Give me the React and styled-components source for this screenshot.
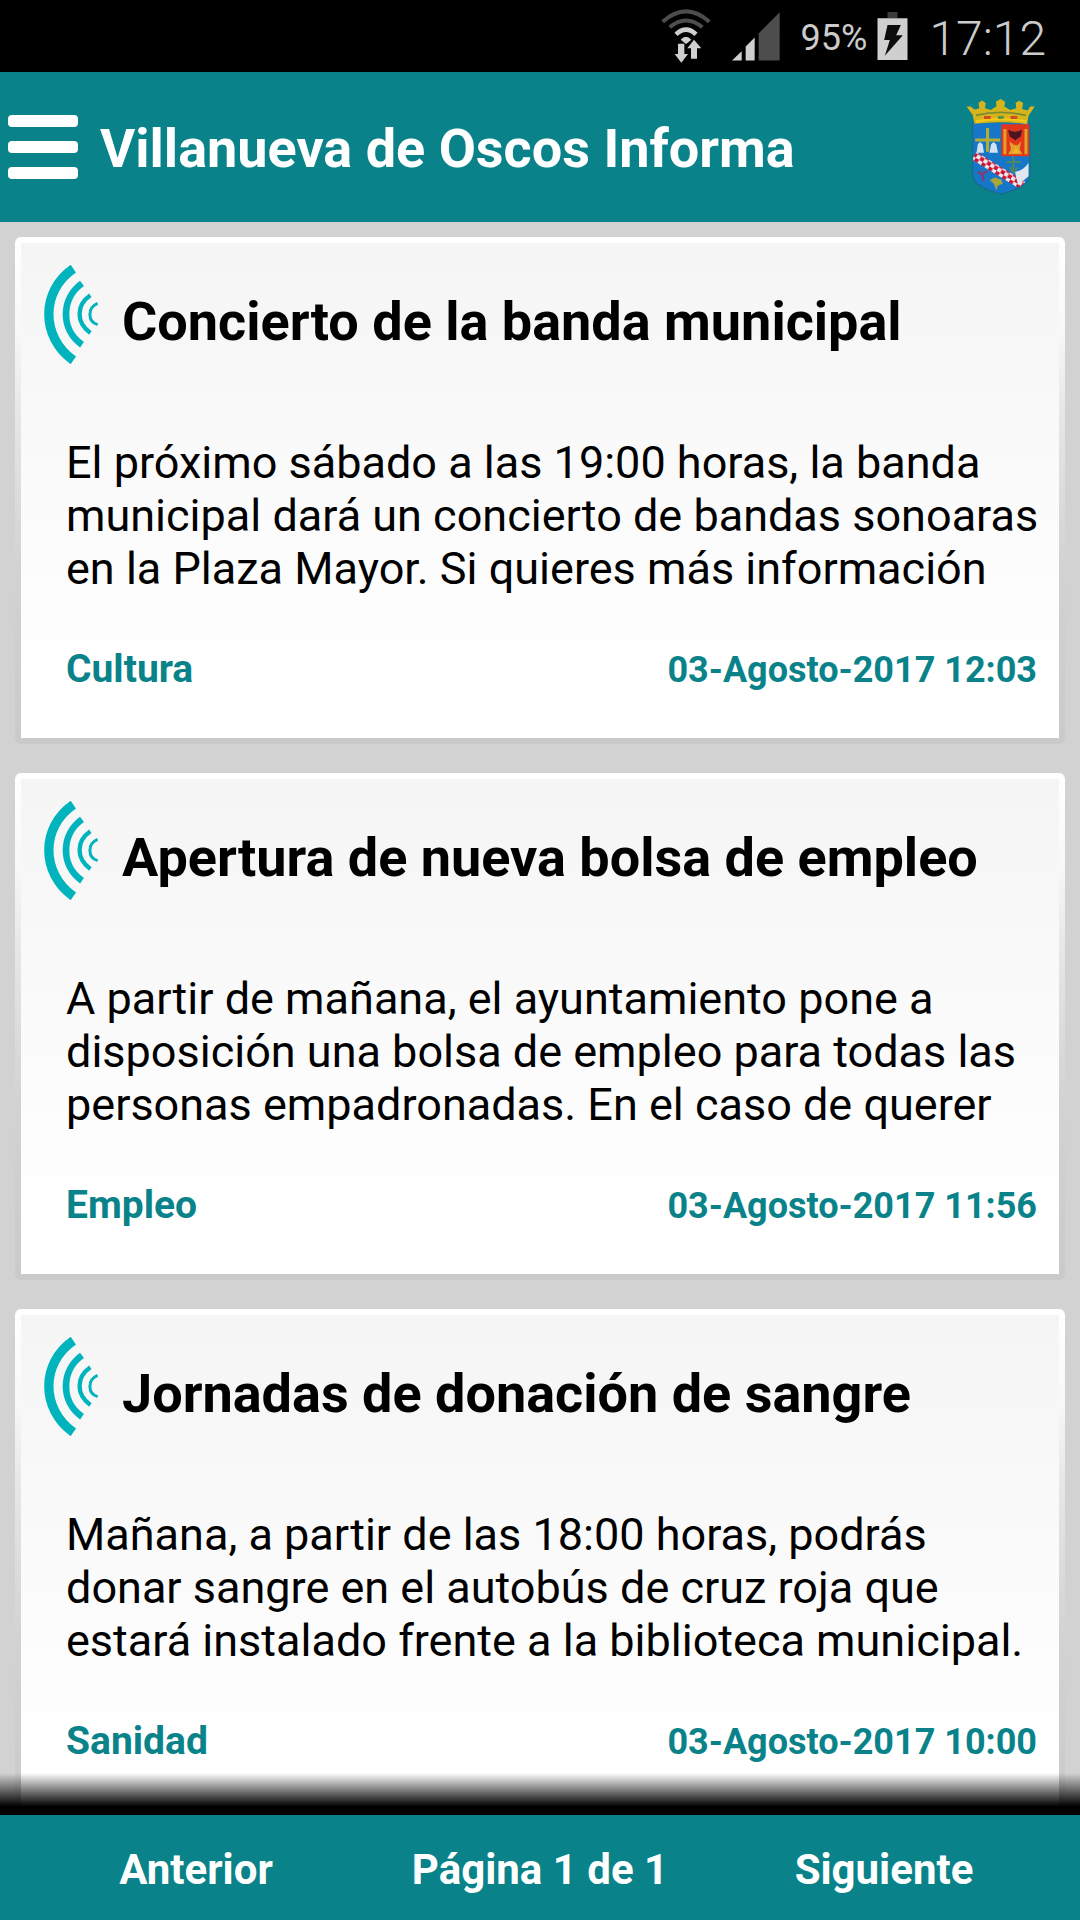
import React, { useState } from "react";
import styled, { createGlobalStyle } from "styled-components";

const news = [
  {
    id: 1,
    title: "Concierto de la banda municipal",
    text: "El próximo sábado a las 19:00 horas, la banda municipal dará un concierto de bandas sonoaras en la Plaza Mayor. Si quieres más información",
    category: "Cultura",
    date: "03-Agosto-2017 12:03",
  },
  {
    id: 2,
    title: "Apertura de nueva bolsa de empleo",
    text: "A partir de mañana, el ayuntamiento pone a disposición una bolsa de empleo para todas las personas empadronadas. En el caso de querer",
    category: "Empleo",
    date: "03-Agosto-2017 11:56",
  },
  {
    id: 3,
    title: "Jornadas de donación de sangre",
    text: "Mañana, a partir de las 18:00 horas, podrás donar sangre en el autobús de cruz roja que estará instalado frente a la biblioteca municipal.",
    category: "Sanidad",
    date: "03-Agosto-2017 10:00",
  },
];

const WifiIcon = () => (
  <svg width="50" height="54" viewBox="66 28 150 162" aria-hidden="true">
    <g fill="none" strokeWidth="12">
      <path d="M71 66 Q141 4 211 66" stroke="#4d4d4d" />
      <path d="M92 83 Q141 42 190 83" stroke="#4d4d4d" />
      <path d="M111 104 Q141 76 171 104" stroke="#cfcfcf" strokeWidth="14" />
    </g>
    <path d="M125 120 Q141 103 157 120 L148 128 L141 133Z" fill="#cfcfcf" />
    <path d="M117 132h19v31h11l-20 26-20-26h10z" fill="#cfcfcf" />
    <path d="M156 177h18v-31h13l-22-26-20 26h11z" fill="#cfcfcf" />
  </svg>
);

const SignalIcon = () => (
  <svg width="48" height="49" viewBox="286 38 144 146" aria-hidden="true">
    <path d="M286 183 L315 155 V183Z" fill="#cfcfcf" />
    <path d="M327 183 V141 L354 114 V183Z" fill="#cfcfcf" />
    <path d="M366 183 V102 L429 38 V183Z" fill="#4d4d4d" />
  </svg>
);

const BatteryIcon = () => (
  <svg width="31" height="48" viewBox="710 36 92 144" aria-hidden="true">
    <path d="M741 36h30v18h-30z" fill="#3c3c3c" />
    <path d="M711 55h90v125h-90z" fill="#cfcfcf" />
    <path d="M741 75h40l-14 31h20l-54 61 15-47h-17z" fill="#0c0c0c" />
  </svg>
);

const WavesIcon = () => (
  <svg width="54" height="99" viewBox="132 134 162 297" aria-hidden="true">
    <g fill="none" stroke="#00b3bd">
      <path d="M220 145 C122 212 122 350 220 420" strokeWidth="28" />
      <path d="M246 189 C182 235 182 329 246 373" strokeWidth="20" />
      <path d="M271 225 C228 255 228 307 271 338" strokeWidth="13" />
      <path d="M293 249 C262 262 262 303 293 313" strokeWidth="9" />
    </g>
  </svg>
);

const CrestIcon = () => (
  <svg width="72" height="100" viewBox="76 58 210 294" role="img" aria-label="Escudo">
    <defs>
      <clipPath id="shield">
        <path d="M99 134H265V280C265 318 228 327 182 342C136 327 99 318 99 280Z" />
      </clipPath>
      <pattern id="checks" width="24" height="24" patternUnits="userSpaceOnUse" patternTransform="rotate(32)">
        <path d="M0 0h24v24H0z" fill="#e9eaf0" />
        <path d="M0 0h12v12H0zM12 12h12v12H12z" fill="#cf1736" />
      </pattern>
      <filter id="soft">
        <feGaussianBlur stdDeviation="2" />
      </filter>
    </defs>
    <g filter="url(#soft)">
      <path d="M96 134H268V282C268 320 230 330 182 346C134 330 96 320 96 282Z" fill="#176c85" />
      <g clipPath="url(#shield)">
        <path d="M96 130h172v214H96z" fill="#1877c9" />
        <path d="M182 138h84v94h-84z" fill="#e2341f" />
        <path d="M188 152h9v74h-9zM250 152h9v74h-9zM206 188l14 12h10l10-12-4 24 8 14h-42l8-14z" fill="#dfa126" />
        <path d="M217 193l7 16-10 14h22l-8-14z" fill="#f0b52a" />
        <path d="M202 154q20 12 41 0l-4 20-16 11-16-11z" fill="#4a1524" />
        <path d="M203 149q20 12 39 0" fill="none" stroke="#d83a22" strokeWidth="5" />
        <path d="M119 190l8 7 4 25h-22l4-25zM159 190l8 7 5 25h-25l5-25z" fill="#d3e2f1" />
        <path d="M137 149h9v70h-9zM105 180h73v9h-73z" fill="#b2ad35" />
        <path d="M102 231L245 318" stroke="url(#checks)" strokeWidth="26" />
        <path d="M222 278q26-4 40-27v40l-31 26z" fill="#dfe6ee" />
        <path d="M217 232v48M197 249h42M207 264l10 16 12-15" fill="none" stroke="#4d8860" strokeWidth="6" />
        <path d="M113 277l11 8 15-9M126 282l4 22" fill="none" stroke="#843d70" strokeWidth="7" />
        <path d="M148 302l15-7 19 6 4 12-15 6-3 14-8-20z" fill="#aaa43e" />
      </g>
      <path
        d="M103 137L98 111L80 87L91 85L103 95L117 92L115 76L125 68L136 76L134 91L151 96L168 85L166 72L180 64L193 72L191 86L208 96L226 91L224 75L235 69L246 76L243 93L259 98L267 86L280 86L262 113L258 138Q180 127 103 137Z"
        fill="#d6b51f"
      />
      <path d="M107 112Q180 94 254 112" fill="none" stroke="#7c8c32" strokeWidth="5" />
      <path d="M108 130Q180 116 254 130" fill="none" stroke="#f3c919" strokeWidth="7" />
      <path d="M131 118h20M209 118h20" stroke="#d14d23" strokeWidth="9" />
      <path d="M172 118h17" stroke="#5b9247" strokeWidth="9" />
    </g>
  </svg>
);

const App = () => {
  const [page, setPage] = useState(1);
  const total = 1;

  return (
    <Screen>
      <GlobalStyle />
      <StatusBar>
        <WifiIcon />
        <SignalIcon />
        <Battery>
          <Percent>95%</Percent>
          <BatteryIcon />
        </Battery>
        <Clock>17:12</Clock>
      </StatusBar>

      <Header>
        <MenuButton aria-label="Menú">
          <Bar />
          <Bar />
          <Bar />
        </MenuButton>
        <HeaderTitle>Villanueva de Oscos Informa</HeaderTitle>
        <CrestIcon />
      </Header>

      <ListWrap>
        <List>
          {news.map((item) => (
            <Card key={item.id}>
              <CardBody>
                <CardHead>
                  <WavesIcon />
                  <CardTitle>{item.title}</CardTitle>
                </CardHead>
                <CardText>{item.text}</CardText>
                <CardFooter>
                  <Category>{item.category}</Category>
                  <PublishDate>{item.date}</PublishDate>
                </CardFooter>
              </CardBody>
            </Card>
          ))}
        </List>
        <Shade />
      </ListWrap>

      <Pager>
        <PagerButton onClick={() => setPage(Math.max(1, page - 1))}>
          Anterior
        </PagerButton>
        <span>
          Página {page} de {total}
        </span>
        <PagerButton onClick={() => setPage(Math.min(total, page + 1))}>
          Siguiente
        </PagerButton>
      </Pager>
    </Screen>
  );
};

export default App;

const GlobalStyle = createGlobalStyle`
  * {
    box-sizing: border-box;
  }

  body {
    margin: 0;
    font-family: Roboto, "Liberation Sans", sans-serif;
    background: #d2d2d2;
  }

  svg {
    display: block;
    flex-shrink: 0;
  }
`;

const Screen = styled.div`
  display: flex;
  flex-direction: column;
  height: 100vh;
`;

const StatusBar = styled.div`
  display: flex;
  align-items: center;
  justify-content: flex-end;
  gap: 21px;
  height: 72px;
  padding-right: 34px;
  background: #000;
  color: #cbcbcb;
  flex-shrink: 0;
`;

const Battery = styled.div`
  display: flex;
  align-items: center;
  gap: 10px;
`;

const Percent = styled.span`
  padding-top: 4px;
  font-size: 36px;
`;

const Clock = styled.span`
  padding-top: 4px;
  font-size: 48px;
  font-weight: 300;
`;

const Header = styled.header`
  display: flex;
  align-items: center;
  height: 150px;
  padding: 0 43px 0 8px;
  background: #098389;
  color: #fff;
  flex-shrink: 0;
`;

const MenuButton = styled.button`
  display: flex;
  flex-direction: column;
  gap: 14px;
  width: 70px;
  padding: 0;
  border: none;
  background: none;
  cursor: pointer;
`;

const Bar = styled.span`
  height: 12px;
  border-radius: 4px;
  background: #fff;
`;

const HeaderTitle = styled.h1`
  flex: 1;
  margin: 0;
  padding: 4px 0 0 22px;
  font-size: 54px;
  line-height: 64px;
  font-weight: 700;
`;

const ListWrap = styled.main`
  position: relative;
  flex: 1;
  min-height: 0;
`;

const List = styled.div`
  display: flex;
  flex-direction: column;
  gap: 29px;
  height: 100%;
  padding: 15px;
  overflow-y: auto;
  scrollbar-width: none;
`;

const Card = styled.article`
  padding: 6px;
  border-radius: 6px;
  background: linear-gradient(
    #fff 0%,
    #f8f8f8 18%,
    #e8e8e8 33%,
    #d2d2d2 65%,
    #cacaca 100%
  );
  flex-shrink: 0;
`;

const CardBody = styled.div`
  padding: 22px 10px 46px 23px;
  background: linear-gradient(#f5f5f5, #fff 90%);
`;

const CardHead = styled.div`
  display: flex;
  align-items: center;
  gap: 24px;
`;

const CardTitle = styled.h2`
  margin: 0;
  padding-top: 14px;
  font-size: 54px;
  line-height: 64px;
  font-weight: 700;
  color: #000;
`;

const CardText = styled.p`
  margin: 72px 0 52px 22px;
  font-size: 45px;
  line-height: 53px;
  color: #000;
`;

const CardFooter = styled.div`
  display: flex;
  align-items: baseline;
  justify-content: space-between;
  margin: 0 12px 0 22px;
  line-height: 44px;
  font-weight: 700;
  color: #098389;
`;

const Category = styled.span`
  font-size: 39px;
`;

const PublishDate = styled.time`
  font-size: 36px;
`;

const Shade = styled.div`
  position: absolute;
  left: 0;
  right: 0;
  bottom: 0;
  height: 42px;
  background: linear-gradient(transparent, #000 80%);
  pointer-events: none;
`;

const Pager = styled.nav`
  display: grid;
  grid-template-columns: repeat(3, 1fr);
  align-items: center;
  height: 105px;
  padding: 4px 24px 0;
  background: #098389;
  color: #fff;
  font-size: 42px;
  font-weight: 700;
  text-align: center;
  flex-shrink: 0;
`;

const PagerButton = styled.button`
  padding: 0;
  border: none;
  background: none;
  color: inherit;
  font: inherit;
  cursor: pointer;
`;
